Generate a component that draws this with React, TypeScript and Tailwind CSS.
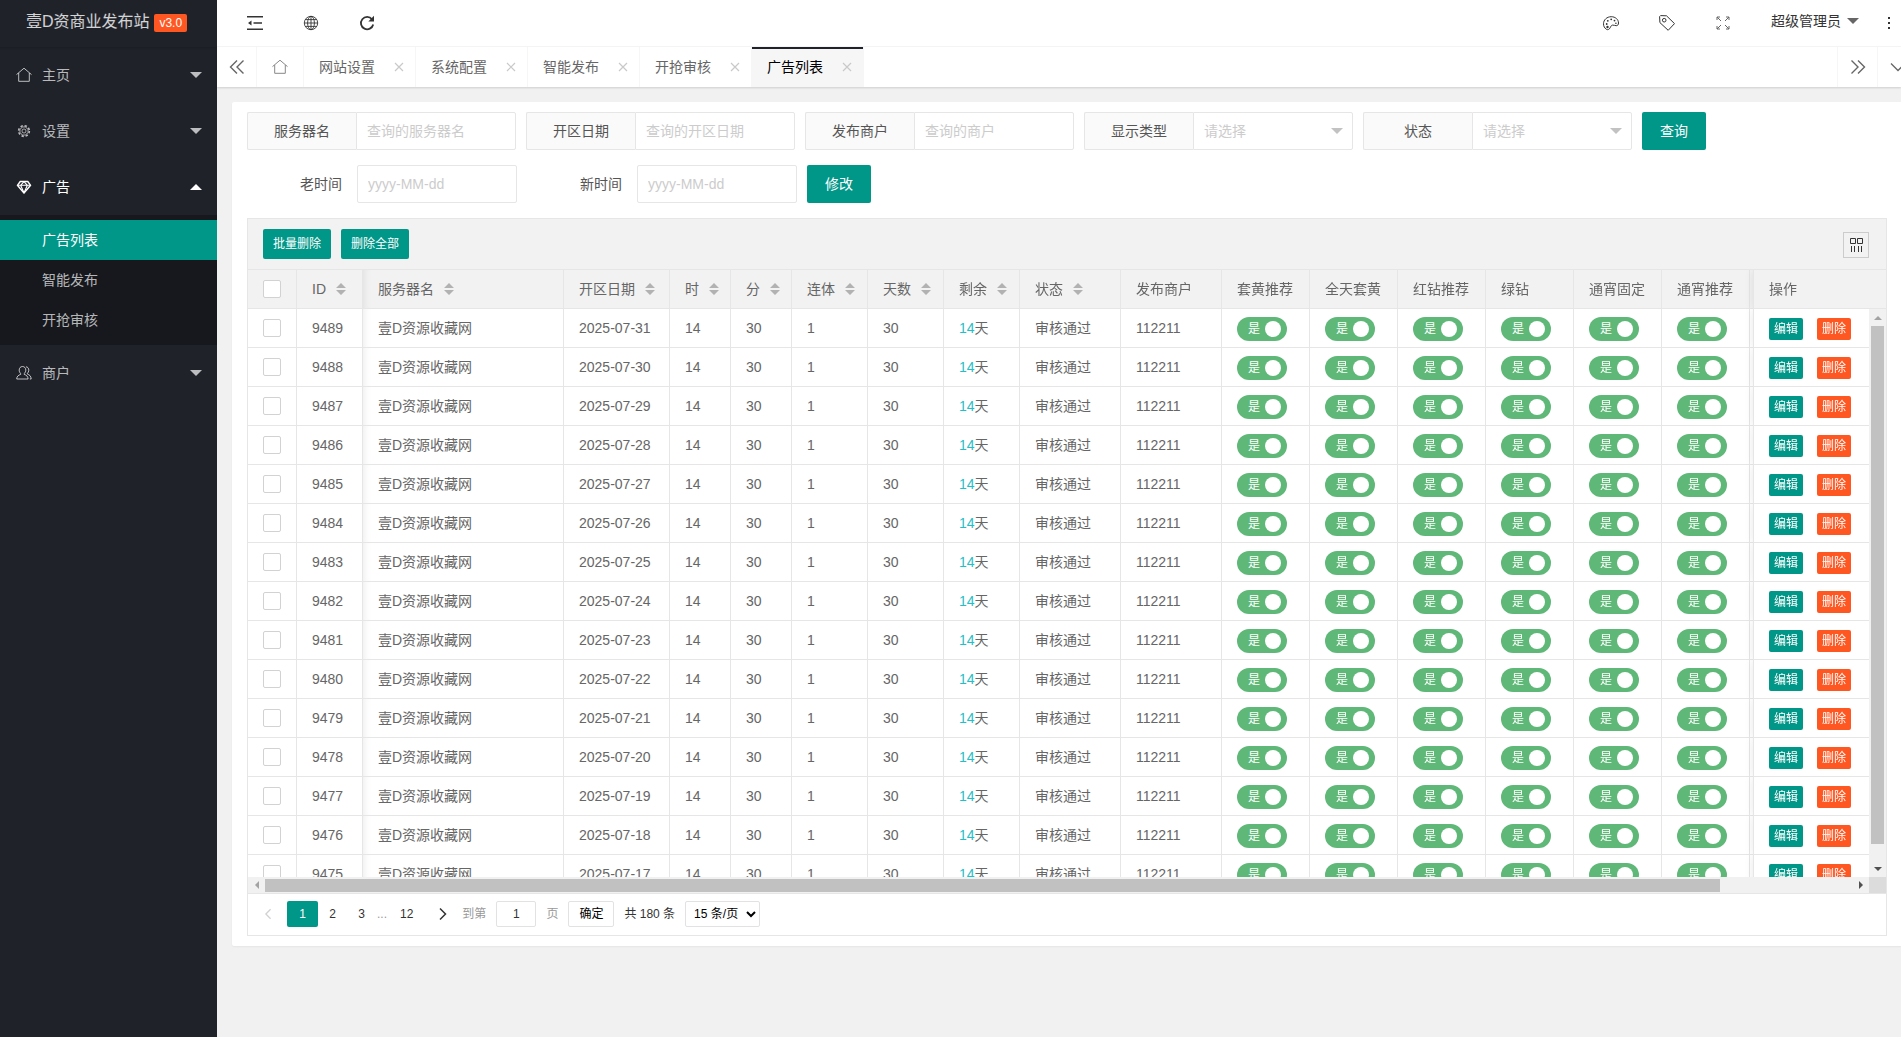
import { useState } from "react";
import clsx from "clsx";

type IconProps = { className?: string };

function HomeIcon({ className }: IconProps) {
  return (
    <svg viewBox="0 0 16 16" className={className} fill="none" stroke="currentColor" aria-hidden="true">
      <path d="M0.5 7.6 8 1.2l7.5 6.4M2.7 6v8.3h10.6V6" />
    </svg>
  );
}

function GearIcon({ className }: IconProps) {
  return (
    <svg viewBox="-1.5 -1.5 19 19" className={className} fill="none" stroke="currentColor" aria-hidden="true">
      <circle cx="8" cy="8" r="2.4" />
      <circle cx="8" cy="8" r="4.9" />
      <circle cx="8" cy="8" r="6.4" strokeWidth="1.8" strokeDasharray="2.8 2.22" />
    </svg>
  );
}

function DiamondIcon({ className }: IconProps) {
  return (
    <svg viewBox="-0.5 -0.5 17 17" className={className} fill="none" stroke="currentColor" strokeWidth="1.5" strokeLinejoin="round" aria-hidden="true">
      <path d="M4 2.2h8l3 4L8 14.3 1 6.2z" />
      <path d="M1.2 6.2h13.6M4.4 6.2 8 14l3.6-7.8M4.4 6.2 8 2.4l3.6 3.8" strokeWidth="1.2" />
    </svg>
  );
}

function UsersIcon({ className }: IconProps) {
  return (
    <svg viewBox="0 0 16 16" className={className} fill="none" stroke="currentColor" aria-hidden="true">
      <path d="M6.5 1.5c2 0 3.3 1.5 3.3 3.6 0 1.5-.7 2.8-1.6 3.4v.9c2.3.7 3.8 2 3.9 4.6H.7c.1-2.6 1.7-3.9 4-4.6v-.9C3.8 7.900 3.200 6.600 3.200 5.100c0-2.100 1.300-3.600 3.300-3.600z" />
      <path d="M10 1.8c1.7.1 2.8 1.5 2.8 3.4 0 1.4-.6 2.5-1.4 3.1v.8c2.2.7 3.6 2 3.8 4.9h-1.4" />
    </svg>
  );
}

function IndentIcon({ className }: IconProps) {
  return (
    <svg viewBox="0 0 16 16" className={className} fill="none" stroke="currentColor" strokeWidth="1.6" aria-hidden="true">
      <path d="M0 1.8h16M6.5 8H15M0 14.2h16" />
      <path d="M4.5 5.5v5L1 8z" fill="currentColor" stroke="none" />
    </svg>
  );
}

function GlobeIcon({ className }: IconProps) {
  return (
    <svg viewBox="0 0 16 16" className={className} fill="none" stroke="currentColor" strokeWidth="0.9" aria-hidden="true">
      <circle cx="8" cy="8" r="6.7" />
      <ellipse cx="8" cy="8" rx="3.4" ry="6.7" />
      <path d="M8 1.3v13.4M1.3 8h13.4M2.4 4.6h11.2M2.4 11.4h11.2" />
    </svg>
  );
}

function RefreshIcon({ className }: IconProps) {
  return (
    <svg viewBox="0 0 16 16" className={className} fill="none" stroke="currentColor" strokeWidth="1.8" aria-hidden="true">
      <path d="M13 4.2A6.2 6.2 0 1 0 14.2 9.5" />
      <path d="M15 0.8v5.7H9.300z" fill="currentColor" stroke="none" />
    </svg>
  );
}

function PaletteIcon({ className }: IconProps) {
  return (
    <svg viewBox="0 0 16 16" className={className} fill="none" stroke="currentColor" aria-hidden="true">
      <path d="M3.4 14.300C1.500 13 .5 11.200.5 8.800.5 4.900 3.900 1.700 8.200 1.700c4.200 0 7.300 2.800 7.300 6.300 0 1.800-.9 2.700-2.300 2.700-1.500 0-2.200-.8-3.600-.6-1.500.2-1.700 1.300-2.500 2.700-.8 1.600-2.300 2.400-3.700 1.500z" />
      <g fill="currentColor" stroke="none">
        <circle cx="3.7" cy="9" r="0.9" />
        <circle cx="4.8" cy="5.8" r="0.9" />
        <circle cx="8.2" cy="4.3" r="0.9" />
        <circle cx="11.5" cy="5.6" r="0.9" />
        <circle cx="12.9" cy="8.200" r="0.8" />
        <circle cx="4.500" cy="12" r="1.200" />
      </g>
    </svg>
  );
}

function TagIcon({ className }: IconProps) {
  return (
    <svg viewBox="0 0 16 16" className={className} fill="none" stroke="currentColor" strokeLinejoin="round" aria-hidden="true">
      <path d="M.6 1.6 1.6.6 7.5.8l8 7.8-6.3 6.7L.9 7.600z" />
      <circle cx="5.200" cy="5.200" r="1.800" />
    </svg>
  );
}

function ExpandIcon({ className }: IconProps) {
  return (
    <svg viewBox="0 0 16 16" className={className} fill="none" stroke="currentColor" aria-hidden="true">
      <path d="M2 5V2h3M11 2h3v3M14 11v3h-3M5 14H2v-3M2 2l4 4M14 2l-4 4M14 14l-4-4M2 14l4-4" />
    </svg>
  );
}

function DoubleChevron({ className }: IconProps) {
  return (
    <svg viewBox="0 0 16 16" className={className} fill="none" stroke="currentColor" strokeWidth="1.4" aria-hidden="true">
      <path d="M8 1.500 1.500 8 8 14.500M14.500 1.500 8 8l6.500 6.500" />
    </svg>
  );
}

function Chevron({ className }: IconProps) {
  return (
    <svg viewBox="0 0 8 14" className={className} fill="none" stroke="currentColor" strokeWidth="1.5" aria-hidden="true">
      <path d="M1 1.500 6.500 7 1 12.500" />
    </svg>
  );
}

function Caret({ className = "h-1.5 w-3" }: IconProps) {
  return (
    <svg viewBox="0 0 12 6" className={className} fill="currentColor" aria-hidden="true">
      <path d="M0 0h12L6 6z" />
    </svg>
  );
}

function CloseIcon({ className }: IconProps) {
  return (
    <svg viewBox="0 0 10 10" className={className} fill="none" stroke="currentColor" strokeWidth="1.2" aria-hidden="true">
      <path d="M1 1l8 8M9 1 1 9" />
    </svg>
  );
}

function SortArrows() {
  return (
    <svg viewBox="0 0 10 12" className="h-3 w-2.5 shrink-0 text-[#b2b2b2]" fill="currentColor" aria-hidden="true">
      <path d="M5 0l5 5H0zM0 7h10l-5 5z" />
    </svg>
  );
}

const menu = [
  { label: "主页", icon: HomeIcon },
  { label: "设置", icon: GearIcon },
  { label: "广告", icon: DiamondIcon, children: ["广告列表", "智能发布", "开抢审核"] },
  { label: "商户", icon: UsersIcon },
];

const tabs = ["网站设置", "系统配置", "智能发布", "开抢审核", "广告列表"];

const columns = [
  { title: "ID", sort: true, width: "w-[66px]" },
  { title: "服务器名", sort: true, width: "w-[201px]" },
  { title: "开区日期", sort: true, width: "w-[106px]" },
  { title: "时", sort: true, width: "w-[61px]" },
  { title: "分", sort: true, width: "w-[61px]" },
  { title: "连体", sort: true, width: "w-[76px]" },
  { title: "天数", sort: true, width: "w-[76px]" },
  { title: "剩余", sort: true, width: "w-[76px]" },
  { title: "状态", sort: true, width: "w-[101px]" },
  { title: "发布商户", sort: false, width: "w-[101px]" },
  { title: "套黄推荐", sort: false, width: "w-[88px]" },
  { title: "全天套黄", sort: false, width: "w-[88px]" },
  { title: "红钻推荐", sort: false, width: "w-[88px]" },
  { title: "绿钻", sort: false, width: "w-[88px]" },
  { title: "通宵固定", sort: false, width: "w-[88px]" },
  { title: "通宵推荐", sort: false, width: "w-[88px]" },
];

const switchColumns = columns.slice(10).map((c) => c.title);

const rows = Array.from({ length: 15 }, (_, i) => ({
  id: 9489 - i,
  name: "壹D资源收藏网",
  date: `2025-07-${31 - i}`,
  hour: 14,
  minute: 30,
  joined: 1,
  days: 30,
  left: 14,
  status: "审核通过",
  merchant: "112211",
}));

const cell = "h-[39px] border-r border-b border-[#e6e6e6] px-[15px] whitespace-nowrap";
const edgeShadow = "shadow-[inset_8px_0_8px_-8px_rgba(0,0,0,0.1)]";
const fixedCell =
  "sticky right-0 h-[39px] border-b border-l border-[#e6e6e6] px-[15px] shadow-[-1px_0_8px_rgba(0,0,0,0.08)] [clip-path:inset(0_0_0_-10px)]";

function Sidebar() {
  const [open, setOpen] = useState("广告");

  return (
    <aside className="w-[217px] shrink-0 bg-[#20222a] text-white/70">
      <div className="flex h-[47px] items-center justify-center gap-[5px] pr-1 pb-1 shadow-[0_1px_2px_rgba(0,0,0,0.15)]">
        <span className="text-base text-white/80">壹D资商业发布站</span>
        <span className="mt-0.5 rounded-xs bg-[#ff5722] px-[5px] text-xs leading-[18px] text-white">v3.0</span>
      </div>
      <nav>
        {menu.map(({ label, icon: Icon, children }) => {
          const active = label === open;
          return (
            <div key={label}>
              <button
                type="button"
                className={clsx("flex h-14 w-full items-center pr-[15px] pl-4", active && "text-white")}
                onClick={() => setOpen(active ? "" : label)}
              >
                <Icon className="size-4" />
                <span className="ml-2.5">{label}</span>
                <Caret className={clsx("ml-auto h-1.5 w-3", active && "rotate-180")} />
              </button>
              {children && active ? (
                <div className="bg-[#16181d] py-[5px]">
                  {children.map((child) => (
                    <a
                      key={child}
                      href="#"
                      className={clsx(
                        "block h-10 pl-[42px] leading-10",
                        child === "广告列表" && "bg-[#009688] text-white",
                      )}
                    >
                      {child}
                    </a>
                  ))}
                </div>
              ) : null}
            </div>
          );
        })}
      </nav>
    </aside>
  );
}

function Header() {
  const item = "flex w-14 items-center justify-center";
  return (
    <header className="flex h-[47px] border-b border-[#f6f6f6] bg-white pl-2.5 text-[#333]">
      <button type="button" className={item} aria-label="侧边伸缩">
        <IndentIcon className="size-4" />
      </button>
      <button type="button" className={item} aria-label="前台">
        <GlobeIcon className="size-4" />
      </button>
      <button type="button" className={item} aria-label="刷新">
        <RefreshIcon className="size-4" />
      </button>
      <div className="ml-auto flex">
        <button type="button" className={item} aria-label="主题">
          <PaletteIcon className="size-4" />
        </button>
        <button type="button" className={item} aria-label="便签">
          <TagIcon className="size-4" />
        </button>
        <button type="button" className={item} aria-label="全屏">
          <ExpandIcon className="size-4 text-[#666]" />
        </button>
        <button type="button" className="flex items-center gap-1.5 pr-[18px] pb-1 pl-5">
          超级管理员
          <Caret className="h-1.5 w-3 text-[#666]" />
        </button>
        <button type="button" className="flex w-6 items-center justify-center" aria-label="更多">
          <svg viewBox="0 0 4 14" className="h-3.5 w-1" fill="currentColor" aria-hidden="true">
            <path d="M1 1h2v2H1zM1 6h2v2H1zM1 11h2v2H1z" />
          </svg>
        </button>
      </div>
    </header>
  );
}

function TabBar() {
  return (
    <div className="relative flex h-10 bg-white text-[#666] shadow-[0_1px_2px_rgba(0,0,0,0.15)]">
      <button type="button" className="flex w-10 items-center justify-center border-r border-[#f6f6f6]" aria-label="向左">
        <DoubleChevron className="size-4" />
      </button>
      <a href="#" className="flex w-[47px] items-center justify-center border-r border-[#f6f6f6]" aria-label="主页">
        <HomeIcon className="size-4 text-[#888]" />
      </a>
      {tabs.map((tab) => {
        const active = tab === "广告列表";
        return (
          <div
            key={tab}
            className={clsx(
              "relative flex w-28 items-center justify-between border-r border-[#f6f6f6] pr-[11px] pl-[15px]",
              active && "bg-[#f6f6f6] text-black",
            )}
          >
            {active ? <span className="absolute inset-x-0 top-0 h-0.5 bg-[#20222a]" /> : null}
            <a href="#">{tab}</a>
            <button type="button" aria-label={`关闭${tab}`} className="text-[#c9c9c9]">
              <CloseIcon className="size-2.5" />
            </button>
          </div>
        );
      })}
      <button type="button" className="ml-auto flex w-[41px] items-center justify-center border-x border-[#f6f6f6]" aria-label="向右">
        <DoubleChevron className="size-4 rotate-180" />
      </button>
      <button type="button" className="flex w-[23px] items-center overflow-hidden pl-3" aria-label="标签操作">
        <svg viewBox="0 0 16 10" className="h-2.5 w-4 shrink-0" fill="none" stroke="currentColor" strokeWidth="1.3" aria-hidden="true">
          <path d="M1 1.500 8 8.500l7-7" />
        </svg>
      </button>
    </div>
  );
}

const labelBox =
  "w-[109px] rounded-l-xs border border-r-0 border-[#e6e6e6] bg-[#fafafa] text-center leading-9 text-[#555]";
const control =
  "h-[38px] w-40 border border-[#e6e6e6] bg-white px-2.5 outline-none placeholder:text-[#ccc]";

function Filters() {
  return (
    <form className="space-y-[15px]" onSubmit={(e) => e.preventDefault()}>
      <div className="flex flex-wrap gap-2.5">
        {[
          ["server", "服务器名", "查询的服务器名"],
          ["date", "开区日期", "查询的开区日期"],
          ["merchant", "发布商户", "查询的商户"],
        ].map(([id, label, placeholder]) => (
          <div key={id} className="flex">
            <label htmlFor={id} className={labelBox}>
              {label}
            </label>
            <input id={id} placeholder={placeholder} className={clsx(control, "rounded-r-xs")} />
          </div>
        ))}
        {[
          ["type", "显示类型"],
          ["status", "状态"],
        ].map(([id, label]) => (
          <div key={id} className="flex">
            <label htmlFor={id} className={labelBox}>
              {label}
            </label>
            <div className="relative">
              <select id={id} className={clsx(control, "appearance-none rounded-r-xs text-[#ccc]")}>
                <option>请选择</option>
              </select>
              <Caret className="pointer-events-none absolute top-4 right-2.5 h-1.5 w-3 text-[#c2c2c2]" />
            </div>
          </div>
        ))}
        <button type="submit" className="h-[38px] w-16 rounded-xs bg-[#009688] text-white">
          查询
        </button>
      </div>
      <div className="flex flex-wrap gap-2.5">
        {[
          ["old-time", "老时间"],
          ["new-time", "新时间"],
        ].map(([id, label]) => (
          <div key={id} className="flex">
            <label htmlFor={id} className="w-[110px] pr-[15px] text-right leading-[38px] text-[#555]">
              {label}
            </label>
            <input id={id} placeholder="yyyy-MM-dd" className={clsx(control, "rounded-xs")} />
          </div>
        ))}
        <button type="button" className="h-[38px] w-16 rounded-xs bg-[#009688] text-white">
          修改
        </button>
      </div>
    </form>
  );
}

function RowCheckbox({ label }: { label: string }) {
  return (
    <input
      type="checkbox"
      aria-label={label}
      className="block size-[18px] appearance-none rounded-xs border border-[#d2d2d2] bg-white checked:border-[#5fb878] checked:bg-[#5fb878]"
    />
  );
}

function Toggle({ label }: { label: string }) {
  const [on, setOn] = useState(true);
  return (
    <label
      className={clsx(
        "relative mt-0.5 flex h-6 w-[50px] cursor-pointer items-center justify-between rounded-full pr-1.5 pl-[11px] text-xs text-white",
        on ? "bg-[#5fb878]" : "flex-row-reverse bg-[#d2d2d2]",
      )}
    >
      <input type="checkbox" className="sr-only" aria-label={label} checked={on} onChange={() => setOn(!on)} />
      <span>{on ? "是" : "否"}</span>
      <span className="size-4 rounded-full bg-white" />
    </label>
  );
}

function DataTable() {
  return (
    <div className="flex h-[607px]">
      <div className="min-w-0 flex-1 overflow-auto [scrollbar-width:none]">
        <table className="w-full min-w-[1620px] table-fixed border-separate border-spacing-0 text-left">
          <thead className="sticky top-0 z-10 bg-[#f2f2f2]">
            <tr>
              <th className={clsx(cell, "w-[49px]")}>
                <RowCheckbox label="全选" />
              </th>
              {columns.map((c) => (
                <th key={c.title} className={clsx(cell, c.width, "font-normal", c.title === "服务器名" && edgeShadow)}>
                  <span className="flex items-center gap-2.5">
                    <span className="shrink-0">{c.title}</span>
                    {c.sort ? <SortArrows /> : null}
                  </span>
                </th>
              ))}
              <td className="border-b border-[#e6e6e6]" />
              <th className={clsx(fixedCell, "w-[116px] bg-[#f2f2f2] font-normal")}>操作</th>
            </tr>
          </thead>
          <tbody>
            {rows.map((row) => (
              <tr key={row.id}>
                <td className={cell}>
                  <RowCheckbox label={`选择 ${row.id}`} />
                </td>
                <td className={cell}>{row.id}</td>
                <td className={clsx(cell, edgeShadow)}>{row.name}</td>
                <td className={cell}>{row.date}</td>
                <td className={cell}>{row.hour}</td>
                <td className={cell}>{row.minute}</td>
                <td className={cell}>{row.joined}</td>
                <td className={cell}>{row.days}</td>
                <td className={cell}>
                  <span className="text-[#1fc0c7]">{row.left}</span>天
                </td>
                <td className={cell}>{row.status}</td>
                <td className={cell}>{row.merchant}</td>
                {switchColumns.map((title) => (
                  <td key={title} className={cell}>
                    <Toggle label={title} />
                  </td>
                ))}
                <td className="border-b border-[#e6e6e6]" />
                <td className={clsx(fixedCell, "bg-white")}>
                  <div className="mt-0.5 flex gap-3.5 text-xs text-white">
                    <button type="button" className="h-[22px] rounded-xs bg-[#009688] px-[5px]">
                      编辑
                    </button>
                    <button type="button" className="h-[22px] rounded-xs bg-[#ff5722] px-[5px]">
                      删除
                    </button>
                  </div>
                </td>
              </tr>
            ))}
          </tbody>
        </table>
      </div>
      <div className="flex w-[17px] flex-col" aria-hidden="true">
        <div className="h-[39px] border-b border-[#e6e6e6] bg-[#f2f2f2]" />
        <div className="flex flex-1 flex-col items-center bg-[#f1f1f1]">
          <span className="flex h-[17px] items-center">
            <Caret className="h-1 w-2 rotate-180 text-[#a3a3a3]" />
          </span>
          <span className="h-[518px] w-[13px] bg-[#c1c1c1]" />
          <span className="mt-auto flex h-[17px] items-center">
            <Caret className="h-1 w-2 text-[#505050]" />
          </span>
        </div>
      </div>
    </div>
  );
}

function HorizontalScroll() {
  return (
    <div className="flex h-[17px] border-b border-[#e6e6e6]" aria-hidden="true">
      <div className="flex flex-1 items-center bg-[#f1f1f1]">
        <span className="flex w-[17px] justify-center">
          <svg viewBox="0 0 4 8" className="h-2 w-1 text-[#a3a3a3]" fill="currentColor">
            <path d="M4 0v8L0 4z" />
          </svg>
        </span>
        <span className="flex-1">
          <span className="block h-[13px] w-11/12 bg-[#c1c1c1]" />
        </span>
        <span className="flex w-[17px] justify-center">
          <svg viewBox="0 0 4 8" className="h-2 w-1 text-[#505050]" fill="currentColor">
            <path d="M0 0v8l4-4z" />
          </svg>
        </span>
      </div>
      <div className="w-[17px] bg-[#dcdcdc]" />
    </div>
  );
}

function Pagination() {
  return (
    <div className="flex h-[41px] items-center pb-px text-xs text-[#333]">
      <button type="button" className="flex h-[26px] w-[39px] items-center justify-center text-[#d2d2d2]" aria-label="上一页">
        <Chevron className="h-3 w-2 rotate-180" />
      </button>
      <button type="button" className="h-[26px] w-[31px] rounded-xs bg-[#009688] text-white">
        1
      </button>
      <button type="button" className="h-[26px] w-[29px]">
        2
      </button>
      <button type="button" className="h-[26px] w-[29px]">
        3
      </button>
      <span className="w-3 text-center text-[#999]">...</span>
      <button type="button" className="h-[26px] px-3">
        12
      </button>
      <button type="button" className="flex h-[26px] w-9 items-center justify-center" aria-label="下一页">
        <Chevron className="h-3.5 w-2" />
      </button>
      <div className="ml-px flex items-center gap-2.5">
        <label htmlFor="page" className="text-[#999]">
          到第
        </label>
        <input id="page" defaultValue="1" className="h-[26px] w-10 rounded-xs border border-[#e2e2e2] text-center outline-none" />
        <span className="text-[#999]">页</span>
        <button type="button" className="h-[26px] rounded-xs border border-[#e2e2e2] px-2.5 text-black">
          确定
        </button>
        <span>共 180 条</span>
        <select aria-label="每页条数" className="h-[26px] w-[75px] rounded-xs border border-[#e2e2e2] bg-white pl-1 text-black">
          <option>15 条/页</option>
        </select>
      </div>
    </div>
  );
}

export default function App() {
  return (
    <div className="flex min-h-screen overflow-hidden bg-[#f1f1f1] font-['Liberation_Sans','Noto_Sans_CJK_SC',sans-serif] text-sm text-[#666]">
      <Sidebar />
      <div className="min-w-0 flex-1">
        <Header />
        <TabBar />
        <main className="mt-[15px] ml-[15px] rounded-l-xs bg-white py-2.5 pr-3.5 pl-[15px] shadow-[0_1px_2px_rgba(0,0,0,0.05)]">
          <Filters />
          <section className="mt-[15px] border border-[#e6e6e6]">
            <div className="flex items-start gap-2.5 border-b border-[#e6e6e6] bg-[#f2f2f2] py-2.5 pr-[17px] pl-[15px] text-xs">
              <button type="button" className="h-[30px] rounded-xs bg-[#009688] px-2.5 text-white">
                批量删除
              </button>
              <button type="button" className="h-[30px] rounded-xs bg-[#009688] px-2.5 text-white">
                删除全部
              </button>
              <button
                type="button"
                aria-label="筛选列"
                className="mt-[3px] ml-auto flex size-[26px] items-center justify-center border border-[#ccc] text-[#333]"
              >
                <svg viewBox="0 0 14 14" className="size-3.5" fill="none" stroke="currentColor" aria-hidden="true">
                  <path d="M1.500 0.500h5v5h-5zM8.500 0.500h5v5h-5zM2.500 8v6M5.500 8v6M9.500 8v6M12.500 8v6" />
                </svg>
              </button>
            </div>
            <DataTable />
            <HorizontalScroll />
            <Pagination />
          </section>
        </main>
      </div>
    </div>
  );
}
